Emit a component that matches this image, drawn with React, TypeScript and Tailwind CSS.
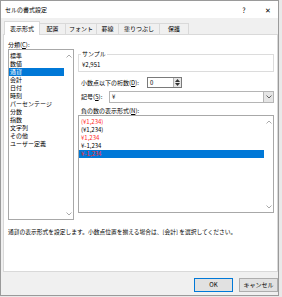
import React from "react";

const font = { fontFamily: '"Noto Sans CJK JP", "Noto Sans", sans-serif' };

function Chevron({ dir, color = "#a0a0a0" }: { dir: "up" | "down"; color?: string }) {
  return (
    <svg width="6" height="4" viewBox="0 0 6 4">
      {dir === "up" ? (
        <path d="M0.5 3.5 L3 1 L5.5 3.5" fill="none" stroke={color} strokeWidth="0.9" />
      ) : (
        <path d="M0.5 0.5 L3 3 L5.5 0.5" fill="none" stroke={color} strokeWidth="0.9" />
      )}
    </svg>
  );
}

function Tri({ dir }: { dir: "up" | "down" }) {
  return (
    <svg width="5" height="3" viewBox="0 0 5 3">
      {dir === "up" ? <path d="M0 3 L2.5 0 L5 3 Z" fill="#333" /> : <path d="M0 0 L2.5 3 L5 0 Z" fill="#333" />}
    </svg>
  );
}

const categories = ["標準", "数値", "通貨", "会計", "日付", "時刻", "パーセンテージ", "分数", "指数", "文字列", "その他", "ユーザー定義"];

const negatives: { t: string; red: boolean }[] = [
  { t: "(¥1,234)", red: true },
  { t: "(¥1,234)", red: false },
  { t: "¥1,234", red: true },
  { t: "¥-1,234", red: false },
  { t: "¥-1,234", red: true },
];

const tabs = [
  { t: "表示形式", w: "w-[36px]" },
  { t: "配置", w: "w-[26px]" },
  { t: "フォント", w: "w-[31px]" },
  { t: "罫線", w: "w-[22px]" },
  { t: "塗りつぶし", w: "w-[41px]" },
  { t: "保護", w: "w-[29px]" },
];

export default function App() {
  return (
    <div className="w-[282px] h-[297px] bg-[#e9e9e9] text-[6px] leading-[8px] text-black" style={font}>
      <div className="w-[279px] h-[296px] border border-[#9a9a9a] flex flex-col bg-[#f0f0f0] box-border">
        {/* title bar */}
        <div className="h-[17px] bg-white flex items-center pl-[4px]">
          <span className="flex-1 text-[6px]">セルの書式設定</span>
          <span className="w-[10px] text-center mr-[14px] text-[7px]">?</span>
          <span className="w-[10px] text-center mr-[5px] text-[7px]">✕</span>
        </div>
        {/* body */}
        <div className="flex flex-col pt-[3px] pl-[2px]">
          {/* tabs */}
          <div className="h-[13px] flex items-end pl-[1px]">
            {tabs.map((tab, i) =>
              i === 0 ? (
                <div
                  key={tab.t}
                  className={`${tab.w} h-[14px] -mb-[1px] bg-white border border-b-0 border-[#d9d9d9] flex items-center justify-center relative z-10`}
                >
                  {tab.t}
                </div>
              ) : (
                <div
                  key={tab.t}
                  className={`${tab.w} h-[11px] bg-[#f0f0f0] border border-l-0 border-b-0 border-[#d9d9d9] flex items-center justify-center`}
                >
                  {tab.t}
                </div>
              )
            )}
          </div>
          {/* panel */}
          <div className="w-[275px] h-[238px] bg-white border border-[#d9d9d9] flex flex-col">
            <div className="flex pl-[4px] pt-[6px]">
              {/* left column */}
              <div className="w-[66px] flex flex-col">
                <div className="h-[8px]">
                  分類(<span className="underline">C</span>):
                </div>
                <div className="h-[171px] border border-[#a8a8a8] flex">
                  <div className="flex-1 flex flex-col pt-[2px]">
                    {categories.map((c, i) => (
                      <div
                        key={c}
                        className={`h-[8px] pl-[1px] whitespace-nowrap ${i === 2 ? "bg-[#0078d7] text-white" : ""}`}
                      >
                        {c}
                      </div>
                    ))}
                  </div>
                  <div className="w-[9px] flex flex-col items-center justify-between pt-[4px] pb-[3px]">
                    <Chevron dir="up" />
                    <Chevron dir="down" />
                  </div>
                </div>
              </div>
              {/* right column */}
              <div className="w-[197px] ml-[4px] flex flex-col">
                <fieldset className="mt-[9px] w-[196px] h-[22px] border border-[#dcdcdc] pl-[2px]">
                  <legend className="px-[1px] h-[8px] leading-[8px]">サンプル</legend>
                  <div className="pl-[1px] pt-[3px] h-[8px]">¥2,951</div>
                </fieldset>
                <div className="mt-[5px] h-[11px] flex items-center">
                  <div className="w-[69px] pl-[3px] whitespace-nowrap">
                    小数点以下の桁数(<span className="underline">D</span>):
                  </div>
                  <div className="w-[35px] h-[11px] border border-[#7a7a7a] flex bg-white">
                    <div className="flex-1 pl-[2px] leading-[9px]">0</div>
                    <div className="w-[8px] flex flex-col items-center justify-center gap-[1px] bg-[#e6e6e6] border-l border-[#b0b0b0]">
                      <Tri dir="up" />
                      <Tri dir="down" />
                    </div>
                  </div>
                </div>
                <div className="mt-[3px] h-[12px] flex items-center">
                  <div className="w-[31px] pl-[3px] whitespace-nowrap">
                    記号(<span className="underline">S</span>):
                  </div>
                  <div className="w-[165px] h-[12px] border border-[#b5b5b5] flex bg-white">
                    <div className="flex-1 pl-[2px] leading-[10px]">¥</div>
                    <div className="w-[10px] bg-[#e5e5e5] border-l border-[#b5b5b5] flex items-center justify-center">
                      <Chevron dir="down" color="#555" />
                    </div>
                  </div>
                </div>
                <div className="mt-[4px] h-[8px] pl-[3px]">
                  負の数の表示形式(<span className="underline">N</span>):
                </div>
                <div className="w-[196px] h-[98px] border border-[#a8a8a8] flex">
                  <div className="flex-1 flex flex-col pt-[2px]">
                    {negatives.map((n, i) => (
                      <div
                        key={i}
                        className={`h-[8px] pl-[2px] ${i === 4 ? "bg-[#0078d7]" : ""} ${
                          n.red ? "text-[#ff2a2a]" : "text-black"
                        }`}
                      >
                        {n.t}
                      </div>
                    ))}
                  </div>
                  <div className="w-[9px] flex flex-col items-center justify-between pt-[4px] pb-[3px]">
                    <Chevron dir="up" />
                    <Chevron dir="down" />
                  </div>
                </div>
              </div>
            </div>
            <div className="mt-[8px] pl-[4px] h-[8px] whitespace-nowrap text-[5.75px]">
              通貨の表示形式を設定します。小数点位置を揃える場合は、[会計] を選択してください。
            </div>
          </div>
          {/* buttons */}
          <div className="mt-[6px] w-[275px] flex justify-end gap-[6px]">
            <button className="w-[39px] h-[14px] bg-[#e1e1e1] border border-[#0078d7] text-[6px] leading-[12px]">
              OK
            </button>
            <button className="w-[39px] h-[14px] bg-[#e1e1e1] border border-[#adadad] text-[6px] leading-[12px]">
              キャンセル
            </button>
          </div>
        </div>
      </div>
    </div>
  );
}
